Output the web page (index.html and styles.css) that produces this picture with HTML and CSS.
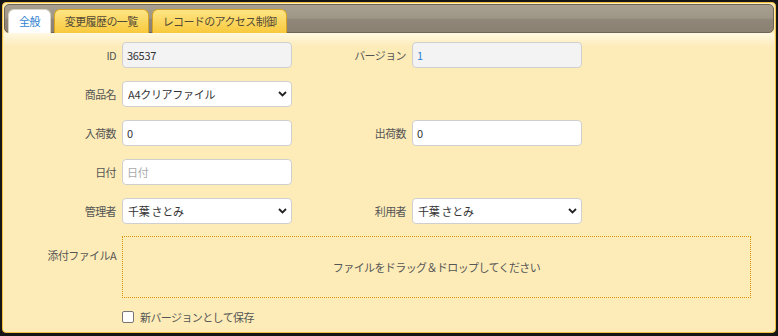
FILE: index.html
```html
<!DOCTYPE html>
<html>
<head>
    <title>レコード編集</title>
    <link rel="stylesheet" href="styles.css">
</head>
<body>
    <div class="panel">
        <div class="tabbar">
            <div class="tab active">全般</div>
            <div class="tab">変更履歴の一覧</div>
            <div class="tab">レコードのアクセス制御</div>
        </div>

        <div class="content">
            <div class="form">
                <label class="lbl">ID</label>
                <input class="field readonly" type="text" value="36537" readonly>
                <label class="lbl">バージョン</label>
                <input class="field readonly version" type="text" value="1" readonly>

                <label class="lbl">商品名</label>
                <div class="selectbox">
                    <select class="field"><option>A4クリアファイル</option></select>
                    <svg class="chev" width="9" height="6" viewBox="0 0 9 6"><path d="M1 1l3.5 3.5L8 1" fill="none" stroke="#222" stroke-width="1.8"/></svg>
                </div>
                <span></span><span></span>

                <label class="lbl">入荷数</label>
                <input class="field" type="text" value="0">
                <label class="lbl">出荷数</label>
                <input class="field" type="text" value="0">

                <label class="lbl">日付</label>
                <input class="field" type="text" placeholder="日付">
                <span></span><span></span>

                <label class="lbl">管理者</label>
                <div class="selectbox">
                    <select class="field"><option>千葉 さとみ</option></select>
                    <svg class="chev" width="9" height="6" viewBox="0 0 9 6"><path d="M1 1l3.5 3.5L8 1" fill="none" stroke="#222" stroke-width="1.8"/></svg>
                </div>
                <label class="lbl">利用者</label>
                <div class="selectbox">
                    <select class="field"><option>千葉 さとみ</option></select>
                    <svg class="chev" width="9" height="6" viewBox="0 0 9 6"><path d="M1 1l3.5 3.5L8 1" fill="none" stroke="#222" stroke-width="1.8"/></svg>
                </div>
            </div>

            <div class="filerow">
                <label class="lbl top">添付ファイルA</label>
                <div class="dropzone">ファイルをドラッグ＆ドロップしてください</div>
            </div>

            <div class="checkrow">
                <label><input type="checkbox" class="check"> 新バージョンとして保存</label>
            </div>
        </div>
    </div>
</body>
</html>
```

FILE: styles.css
```css
html, body { margin: 0; height: 100%; }
body { background: #151515; padding: 2px 2px 3px 2px; box-sizing: border-box; font-family: "Noto Sans CJK JP", "Noto Sans", sans-serif; font-size: 11px; letter-spacing: -0.6px; color: #555; }

.panel { height: 100%; box-sizing: border-box; border: 1px solid #f0c040; border-radius: 4px; padding: 1px; background: #fdecb8; display: flex; flex-direction: column; }

.tabbar { height: 27px; border: 1px solid #6e6455; border-radius: 5px; padding-left: 3px; display: flex; align-items: flex-end; gap: 3px;
    background: linear-gradient(#a7a090, #9e9686 48%, #90877a 54%, #8a8172); }
.tab { height: 23px; line-height: 22px; padding: 0 10px; margin-bottom: -1px; border: 1px solid #d9a520; border-bottom: none; border-radius: 6px 6px 0 0;
    background: linear-gradient(#fee585, #f8c93c); color: #554a35; }
.tab.active { background: #fff; border-color: #d8d2c4; color: #2f7fd0; }

.content { flex: 1; padding-top: 9px; background: linear-gradient(#fff8e2, #fdecb8 14px); }

.form { display: grid; grid-template-columns: 112px 170px 108px 170px; grid-auto-rows: 26px; column-gap: 6px; row-gap: 13px; }
.lbl { text-align: right; align-self: center; }
.lbl.top { align-self: flex-start; padding-top: 11px; }

.field { box-sizing: border-box; width: 170px; height: 26px; border: 1px solid #cfcfcf; border-radius: 4px; background: #fff; padding: 0 4px;
    font-family: inherit; font-size: 11px; letter-spacing: -0.3px; color: #333; outline: none; }
.field::placeholder { color: #aaa; }
.field.readonly { background: #f3f3f3; }
.field.version { color: #2f7fd0; }

.selectbox { position: relative; }
.selectbox select { appearance: none; -webkit-appearance: none; padding-left: 5px; }
.chev { position: absolute; right: 5px; top: 10px; pointer-events: none; }

.filerow { display: flex; gap: 6px; margin-top: 12px; }
.filerow .lbl { width: 112px; }
.dropzone { width: 629px; height: 62px; box-sizing: border-box; border: 1px dotted #d8960a; display: flex; align-items: center; justify-content: center; color: #555; }

.checkrow { margin-top: 11px; padding-left: 118px; }
.checkrow label { display: flex; align-items: center; gap: 6px; }
.check { appearance: none; -webkit-appearance: none; margin: 0; width: 12px; height: 12px; border: 1px solid #767676; border-radius: 2px; background: #fff; }
```
